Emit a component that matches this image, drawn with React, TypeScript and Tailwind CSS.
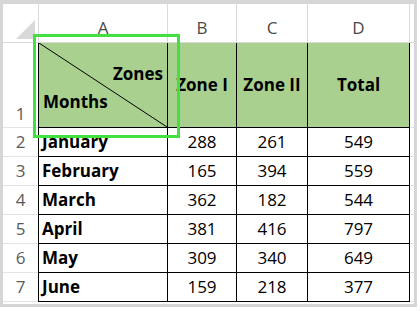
const columns = [
  { key: "A", width: "w-[130px]", title: "" },
  { key: "B", width: "w-[69px]", title: "Zone I" },
  { key: "C", width: "w-[71px]", title: "Zone II" },
  { key: "D", width: "w-[102px]", title: "Total" },
];

const rows = [
  { month: "January", a: 288, b: 261, total: 549 },
  { month: "February", a: 165, b: 394, total: 559 },
  { month: "March", a: 362, b: 182, total: 544 },
  { month: "April", a: 381, b: 416, total: 797 },
  { month: "May", a: 309, b: 340, total: 649 },
  { month: "June", a: 159, b: 218, total: 377 },
];

function CornerCell() {
  return (
    <div className="relative h-[39px] w-[35px] shrink-0 border-b border-[#d9d9d9]">
      <svg className="absolute left-[13px] top-[16px]" width="20" height="20" viewBox="0 0 20 20">
        <polygon points="0,19 19,19 19,0" fill="#d9d9d9" />
      </svg>
    </div>
  );
}

function RowNumber({ n, tall }: { n: number; tall?: boolean }) {
  return (
    <div
      className={`flex w-[35px] shrink-0 justify-center border-b border-[#e4e4e4] text-[17px] text-[#5a5a5a] ${
        tall ? "h-[85px] items-end pb-[1px]" : "h-[29px] items-center"
      }`}
    >
      {n}
    </div>
  );
}

export default function App() {
  return (
    <div className="h-[311px] w-[420px] bg-white font-['Open_Sans',sans-serif]">
      <div className="relative h-[307px] w-[417px] overflow-hidden border-x-[3px] border-b-[3px] border-t-4 border-[#d6d6d6] bg-white">
        {/* column headers */}
        <div className="flex">
          <CornerCell />
          {columns.map((col, i) => (
            <div
              key={col.key}
              className={`flex h-[39px] ${col.width} shrink-0 items-end justify-center border-b border-r border-[#d9d9d9] pb-[6px] text-[17px] leading-none text-[#4a4a4a] ${
                i === 0 ? "border-l" : ""
              }`}
            >
              {col.key}
            </div>
          ))}
          <div className="h-[39px] flex-1 border-b border-[#d9d9d9]" />
        </div>

        {/* row 1: headings */}
        <div className="flex">
          <RowNumber n={1} tall />
          <div className="relative h-[85px] w-[130px] shrink-0 border-x border-b border-black bg-[#a9d08e] text-[17px] font-bold text-black">
            <svg className="absolute inset-0" width="128" height="84" viewBox="0 0 128 84">
              <line x1="0" y1="0" x2="128" y2="84" stroke="black" strokeWidth="1" />
            </svg>
            <div className="relative flex h-full flex-col justify-center gap-[4px] px-[4px] pt-[5px] leading-[24px]">
              <span className="self-end">Zones</span>
              <span className="self-start">Months</span>
            </div>
          </div>
          {columns.slice(1).map((col) => (
            <div
              key={col.key}
              className={`flex h-[85px] ${col.width} shrink-0 items-center justify-center whitespace-nowrap border-b border-r border-black bg-[#a9d08e] text-[17px] font-bold text-black`}
            >
              {col.title}
            </div>
          ))}
          <div className="h-[85px] flex-1 border-b border-[#e4e4e4]" />
        </div>

        {/* data rows */}
        {rows.map((row, i) => (
          <div key={row.month} className="flex">
            <RowNumber n={i + 2} />
            <div className="flex h-[29px] w-[130px] shrink-0 items-center border-x border-b border-black pl-[3px] text-[17px] font-bold text-black">
              {row.month}
            </div>
            <div className="flex h-[29px] w-[69px] shrink-0 items-center justify-center border-b border-r border-black text-[17px] text-black">
              {row.a}
            </div>
            <div className="flex h-[29px] w-[71px] shrink-0 items-center justify-center border-b border-r border-black text-[17px] text-black">
              {row.b}
            </div>
            <div className="flex h-[29px] w-[102px] shrink-0 items-center justify-center border-b border-r border-black text-[17px] text-black">
              {row.total}
            </div>
            <div className="h-[29px] flex-1 border-b border-[#e4e4e4]" />
          </div>
        ))}

        {/* selection outline around A1 */}
        <div className="absolute left-[30px] top-[30px] h-[104px] w-[147px] border-[3px] border-[#42e040]" />
      </div>
    </div>
  );
}
